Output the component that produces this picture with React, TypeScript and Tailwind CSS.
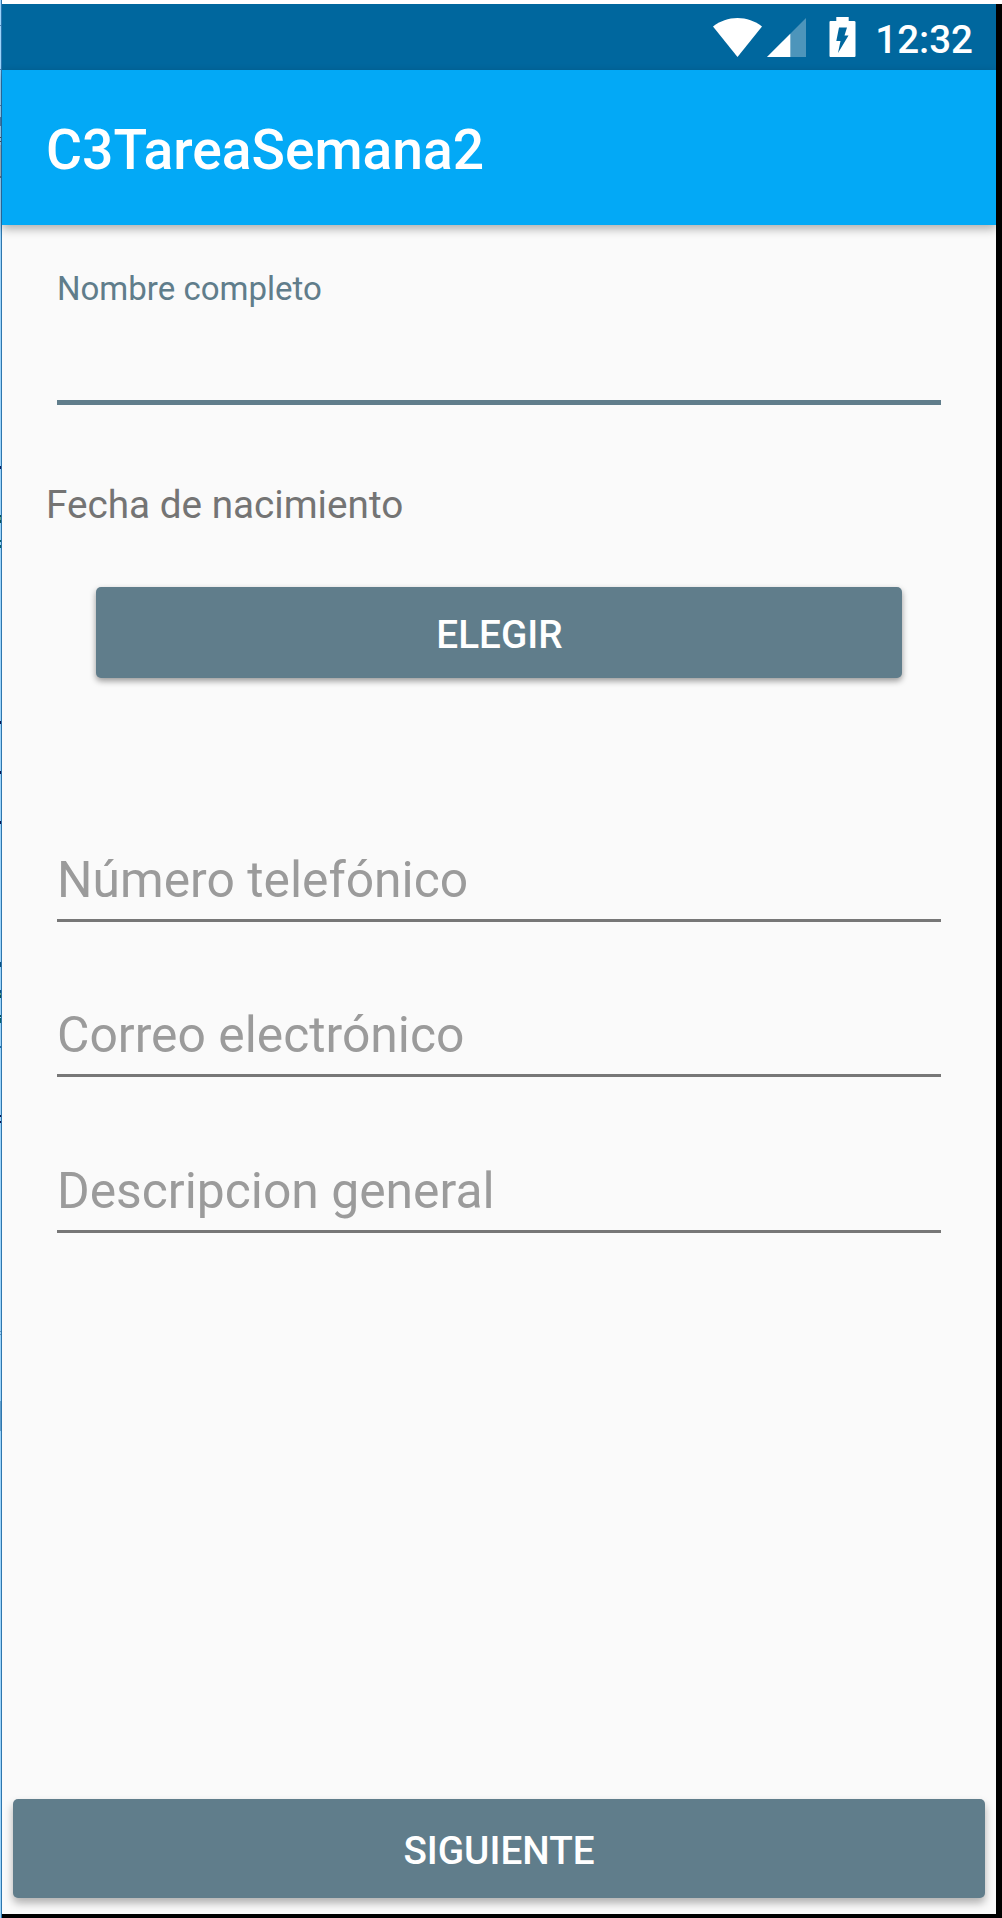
import React from "react";

const edgeMarks = [
  { top: 25, height: 1, color: "#4d83b5" },
  { top: 69, height: 1, color: "#4d83b5" },
  { top: 105, height: 1, color: "#4d83b5" },
  { top: 117, height: 9, color: "#4d83b5" },
  { top: 137, height: 1, color: "#55585c" },
  { top: 141, height: 1, color: "#55585c" },
  { top: 145, height: 31, color: "#a3b6c4" },
  { top: 176, height: 2, color: "#64798c" },
  { top: 466, height: 3, color: "#0a1c5e" },
  { top: 515, height: 2, color: "#04505a" },
  { top: 517, height: 3, color: "#5fa08a" },
  { top: 520, height: 3, color: "#04505a" },
  { top: 540, height: 2, color: "#04606e" },
  { top: 545, height: 3, color: "#04606e" },
  { top: 721, height: 3, color: "#06114f" },
  { top: 771, height: 3, color: "#06114f" },
  { top: 821, height: 3, color: "#06114f" },
  { top: 962, height: 5, color: "#064e80" },
  { top: 990, height: 3, color: "#064e80" },
  { top: 993, height: 2, color: "#5fa08a" },
  { top: 995, height: 3, color: "#04505a" },
  { top: 1015, height: 2, color: "#04505a" },
  { top: 1018, height: 5, color: "#04606e" },
  { top: 1046, height: 2, color: "#1f70ad" },
  { top: 1115, height: 2, color: "#06114f" },
  { top: 1121, height: 2, color: "#06114f" },
  { top: 1331, height: 1, color: "#5d93bf" },
  { top: 1334, height: 1, color: "#5d93bf" },
  { top: 1401, height: 30, color: "#5f9dcc" },
];

function WindowEdge() {
  return (
    <div className="relative w-[2px] shrink-0 border-r border-[#2e76ad] bg-[#9bd3fa]">
      {edgeMarks.map((m) => (
        <span
          key={m.top}
          className="absolute left-0 w-px"
          style={{ top: m.top, height: m.height, backgroundColor: m.color }}
        />
      ))}
    </div>
  );
}

function StatusBar() {
  return (
    <div className="flex h-[66px] shrink-0 items-start justify-end bg-[#00679e] pr-[23px] text-white">
      <svg className="mt-[14px] h-[39px] w-[49px]" viewBox="0 0 49 39" fill="currentColor">
        <path d="M0 8.5C7 3 15.500 0 24.500 0S42 3 49 8.500L24.500 39Z" />
      </svg>
      <svg className="mt-[14px] ml-[5px] h-[39px] w-[39px]" viewBox="0 0 39 39" fill="currentColor">
        <path d="M0 39L39 0V39Z" opacity="0.3" />
        <path d="M0 39L23.300 15.700V39Z" />
      </svg>
      <svg className="mt-[13px] ml-[23px] h-[40px] w-[27px]" viewBox="0 0 27 40" fill="currentColor">
        <path
          fillRule="evenodd"
          d="M7.300 0H19.700V4H25Q26.500 4 26.500 5V39Q26.500 40 25.500 40H1.500Q.5 40 .5 39V5Q.5 4 1.500 4H7.300ZM10 10.500H18L15.500 18.500H19.500L9 36L11.500 24H7.300Z"
        />
      </svg>
      <span className="mt-[12.500px] ml-[19px] text-[38.500px] leading-[46px] font-medium">12:32</span>
    </div>
  );
}

function Field({ label }: { label: string }) {
  return (
    <div className="flex h-[155.300px] flex-col justify-end border-b-[3px] border-[#777777] pb-[10px]">
      <div className="text-[49.800px] leading-[58px] whitespace-nowrap text-[#9b9b9b]">{label}</div>
    </div>
  );
}

function RaisedButton({ children, className }: { children: React.ReactNode; className: string }) {
  return (
    <button
      className={`flex items-center justify-center rounded-[5px] bg-[#607d8b] text-[38.700px] font-medium text-white ${className}`}
    >
      {children}
    </button>
  );
}

export default function App() {
  return (
    <div className="flex h-[1918px] w-[1002px] overflow-hidden bg-white font-['Roboto',sans-serif]">
      <WindowEdge />
      <div className="flex min-w-0 flex-1 flex-col pt-[4px]">
        <div className="flex min-h-0 flex-1 flex-col border-r-[6px] border-b-[4px] border-black bg-[#fafafa]">
          <StatusBar />
          <header className="z-10 flex h-[155px] shrink-0 items-center bg-[#03a9f6] pt-[5px] pl-[44px] shadow-[0_4px_9px_rgba(0,0,0,0.3)]">
            <h1 className="text-[55.200px] leading-[84px] font-medium text-white">C3TareaSemana2</h1>
          </header>
          <main className="flex flex-1 flex-col pt-[44px]">
            <div className="ml-[55px] h-[136px] w-[884px] border-b-[5px] border-[#607d8b]">
              <div className="text-[33px] leading-[40px] text-[#607d8b]">Nombre completo</div>
            </div>
            <div className="mt-[77px] ml-[44px] text-[38.700px] leading-[46px] text-[#747474]">Fecha de nacimiento</div>
            <RaisedButton className="mt-[59px] ml-[94px] h-[91px] w-[806px] pt-[6px] pl-[1px] shadow-[0_3px_6px_rgba(0,0,0,0.4)]">ELEGIR</RaisedButton>
            <div className="mt-[88.700px] ml-[55px] w-[884px]">
              <Field label="Número telefónico" />
              <Field label="Correo electrónico" />
              <Field label="Descripcion general" />
            </div>
            <RaisedButton className="mt-auto mb-[16px] ml-[11px] h-[99px] w-[972px] pt-[6px] shadow-[0_5px_8px_rgba(0,0,0,0.3)]">SIGUIENTE</RaisedButton>
          </main>
        </div>
      </div>
    </div>
  );
}
